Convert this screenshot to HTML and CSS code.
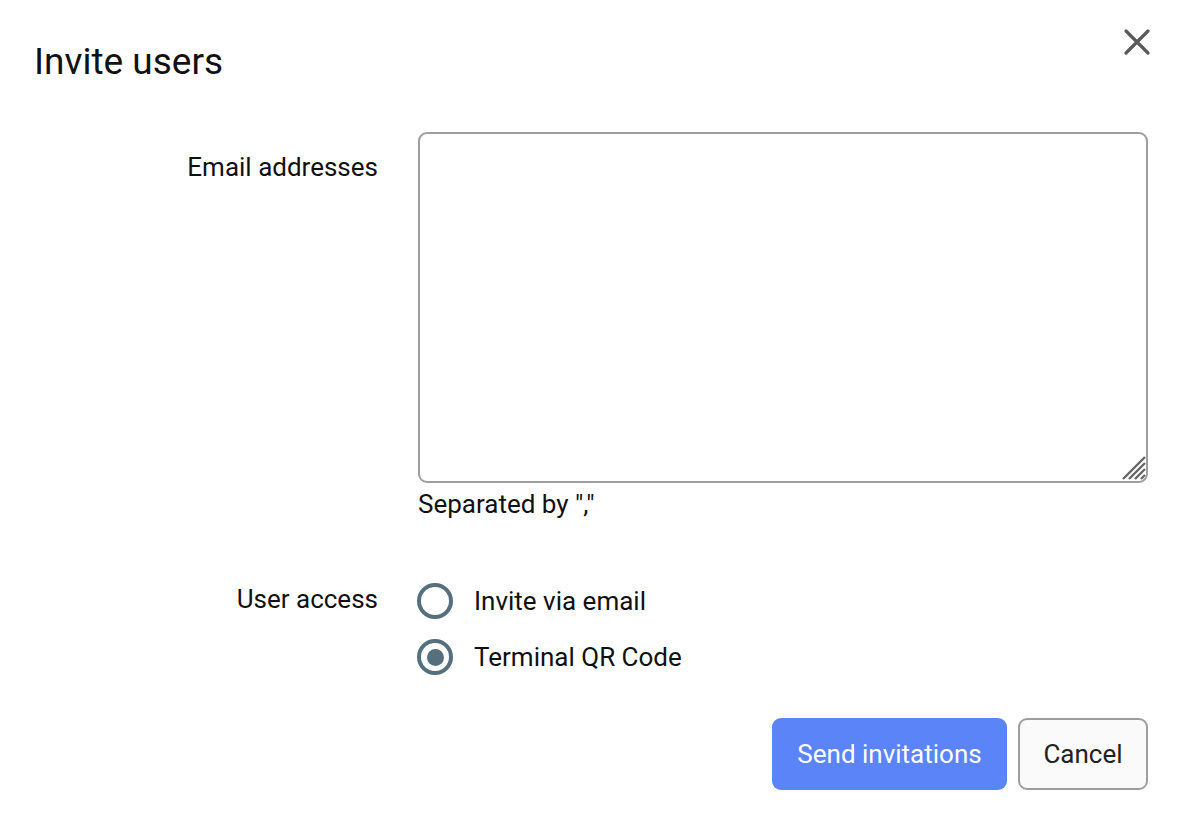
FILE: index.html
```html
<!DOCTYPE html>
<html lang="en">
<head>
<meta charset="utf-8">
<title>Invite users</title>
<link rel="stylesheet" href="styles.css">
</head>
<body>
<div class="dialog">
  <header class="dialog-header">
    <h1 class="dialog-title">Invite users</h1>
    <button class="close-btn" aria-label="Close">
      <svg width="28" height="28" viewBox="0 0 28 28"><path d="M3 3 L25 25 M25 3 L3 25" stroke="#5a5a5a" stroke-width="3.2" stroke-linecap="round"/></svg>
    </button>
  </header>
  <form class="form">
    <label class="field-label label-email" for="emails">Email addresses</label>
    <div class="field">
      <div class="textarea-wrap">
        <textarea id="emails" class="textarea"></textarea>
        <svg class="resize-grip" width="26" height="26" viewBox="0 0 26 26">
          <path d="M3 25 L25 3 M9 25 L25 9 M15 25 L25 15 M21 25 L25 21" stroke="#666" stroke-width="2.4"/>
        </svg>
      </div>
      <div class="helper">Separated by ","</div>
    </div>

    <div class="field-label label-access">User access</div>
    <div class="field radios">
      <label class="radio-row">
        <span class="radio"></span>
        <span class="radio-text">Invite via email</span>
      </label>
      <label class="radio-row">
        <span class="radio checked"></span>
        <span class="radio-text">Terminal QR Code</span>
      </label>
    </div>

    <div class="actions">
      <button type="button" class="btn btn-primary">Send invitations</button>
      <button type="button" class="btn btn-secondary">Cancel</button>
    </div>
  </form>
</div>
</body>
</html>
```
FILE: styles.css
```css
* { box-sizing: border-box; }
html, body {
  margin: 0;
  padding: 0;
  background: #ffffff;
  font-family: Roboto, "Liberation Sans", Arial, sans-serif;
  color: #111;
}
.dialog {
  width: 1188px;
  height: 824px;
  padding: 0 40px 0 34px;
}
.dialog-header {
  display: flex;
  justify-content: space-between;
  align-items: flex-start;
  height: 132px;
}
.dialog-title {
  margin: 0;
  padding-top: 40px;
  font-size: 37px;
  font-weight: 400;
  line-height: 43px;
  color: #111;
}
.close-btn {
  margin-top: 28px;
  margin-right: -3px;
  width: 28px;
  height: 28px;
  padding: 0;
  border: none;
  background: none;
  display: flex;
}
.form {
  display: grid;
  grid-template-columns: 344px 730px;
  column-gap: 40px;
  align-items: start;
}
.field-label {
  font-size: 26px;
  line-height: 28px;
  text-align: right;
  color: #111;
}
.label-email { padding-top: 21px; }
.label-access {
  margin-top: 65px;
  line-height: 32px;
}
.field { display: flex; flex-direction: column; }
.textarea-wrap {
  position: relative;
  height: 351px;
}
.textarea {
  display: block;
  width: 100%;
  height: 100%;
  border: 2px solid #9e9e9e;
  border-radius: 9px;
  resize: none;
  outline: none;
  padding: 12px;
  font-family: inherit;
  font-size: 26px;
  background: #fff;
}
.resize-grip {
  position: absolute;
  right: 2px;
  bottom: 3px;
}
.helper {
  margin-top: 7px;
  font-size: 26px;
  line-height: 28px;
  color: #111;
}
.radios {
  margin-top: 65px;
  gap: 20px;
}
.radio-row {
  display: flex;
  align-items: center;
  height: 36px;
  gap: 21px;
}
.radio {
  width: 36px;
  height: 36px;
  border: 4px solid #556f7d;
  border-radius: 50%;
  display: flex;
  align-items: center;
  justify-content: center;
  margin-left: -1px;
}
.radio.checked::after {
  content: "";
  width: 17px;
  height: 17px;
  border-radius: 50%;
  background: #556f7d;
}
.radio-text {
  font-size: 26px;
  line-height: 28px;
  color: #111;
}
.actions {
  grid-column: 1 / -1;
  display: flex;
  justify-content: flex-end;
  gap: 11px;
  margin-top: 43px;
}
.btn {
  height: 72px;
  border-radius: 9px;
  font-family: inherit;
  font-size: 26px;
  padding: 0 20px;
}
.btn-primary {
  width: 235px;
  background: #5b84f8;
  border: none;
  color: #fff;
}
.btn-secondary {
  width: 130px;
  background: #fafafa;
  border: 2px solid #9e9e9e;
  color: #222;
}
```
